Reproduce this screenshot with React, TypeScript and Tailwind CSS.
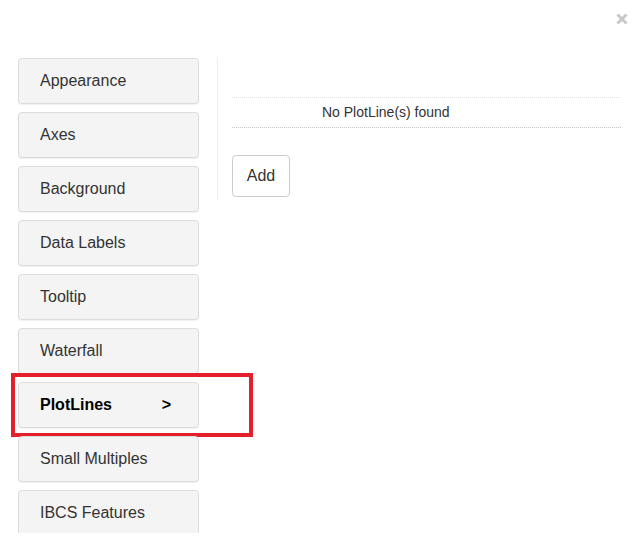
const items = [
  'Appearance',
  'Axes',
  'Background',
  'Data Labels',
  'Tooltip',
  'Waterfall',
  'PlotLines',
  'Small Multiples',
  'IBCS Features',
]

export default function App() {
  return (
    <div
      className="w-[637px] h-[544px] overflow-hidden bg-white text-[#333]"
      style={{ fontFamily: "'Liberation Sans', Arial, sans-serif" }}
    >
      <div className="h-[57px] flex justify-end items-start pt-[13px] pr-[9px]">
        <svg width="12" height="12" viewBox="0 0 12 12">
          <path d="M1.5 1.5 L10.5 10.5 M10.5 1.5 L1.5 10.5" stroke="#c8c8c8" strokeWidth="3" />
        </svg>
      </div>
      <div className="h-[476px] overflow-hidden flex items-start pl-[18px]">
        <div className="w-[181px] flex flex-col gap-[8px] pt-px">
          {items.map(name => {
            const active = name === 'PlotLines'
            return (
              <div key={name} className="relative">
                <button
                  className={
                    'w-full h-[46px] flex items-center pl-[21px] pr-[27px] text-[16px] text-left bg-[#f4f4f4] border border-[#dcdcdc] rounded-[4px] shadow-[0_1px_1px_rgba(0,0,0,0.06)] ' +
                    (active ? 'font-bold text-black justify-between' : 'text-[#333]')
                  }
                >
                  <span>{name}</span>
                  {active && <span>&gt;</span>}
                </button>
                {active && (
                  <div className="absolute -left-[7px] -top-[9px] w-[242px] h-[64px] border-4 border-[#e4202a] pointer-events-none" />
                )}
              </div>
            )
          })}
        </div>
        <div className="ml-[18px] w-[404px] border-l border-[#eeeeee] pl-[14px] pt-[40px] pb-[3px]">
          <div className="border-t border-dotted border-[#e2e2e2]" />
          <div className="h-[29px] flex items-center pl-[90px] text-[14px] text-[#333]">
            No PlotLine(s) found
          </div>
          <div className="border-t border-dotted border-[#c4c4c4]" />
          <button className="mt-[27px] w-[58px] h-[42px] border border-[#cccccc] rounded-[4px] bg-white text-[16px] text-[#333]">
            Add
          </button>
        </div>
      </div>
    </div>
  )
}
